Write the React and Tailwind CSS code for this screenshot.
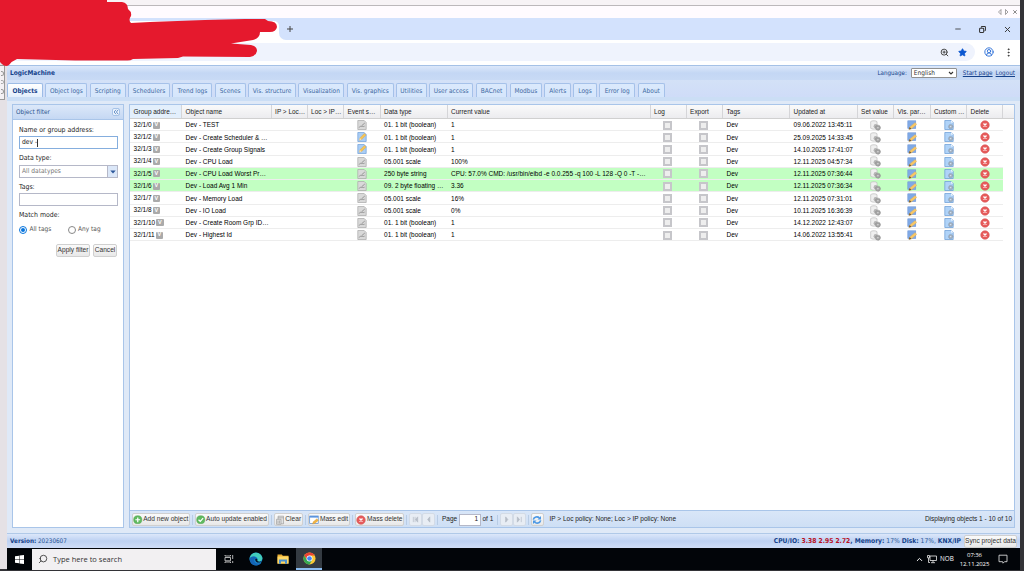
import { Search, ZoomIn, Star, CircleUserRound, EllipsisVertical, Minus, Copy, X, ChevronUp } from 'lucide-react'

const tabs = [
    { label: 'Object logs', width: 'w-[42px]' },
    { label: 'Scripting', width: 'w-[36px]' },
    { label: 'Schedulers', width: 'w-[42px]' },
    { label: 'Trend logs', width: 'w-[40px]' },
    { label: 'Scenes', width: 'w-[31px]' },
    { label: 'Vis. structure', width: 'w-[48px]' },
    { label: 'Visualization', width: 'w-[46px]' },
    { label: 'Vis. graphics', width: 'w-[47px]' },
    { label: 'Utilities', width: 'w-[30.5px]' },
    { label: 'User access', width: 'w-[44.5px]' },
    { label: 'BACnet', width: 'w-[31.5px]' },
    { label: 'Modbus', width: 'w-[32.5px]' },
    { label: 'Alerts', width: 'w-[26.5px]' },
    { label: 'Logs', width: 'w-[23.5px]' },
    { label: 'Error log', width: 'w-[36px]' },
    { label: 'About', width: 'w-[27.5px]' },
]

const headers = [
    'Group addre…', 'Object name', 'IP > Loc…', 'Loc > IP…', 'Event s…', 'Data type', 'Current value', 'Log',
    'Export', 'Tags', 'Updated at', 'Set value', 'Vis. par…', 'Custom …', 'Delete',
]

const objects = [
    { addr: '32/1/0', name: 'Dev - TEST', type: '01. 1 bit (boolean)', value: '1', updated: '09.06.2022 13:45:11' },
    { addr: '32/1/2', name: 'Dev - Create Scheduler & …', type: '01. 1 bit (boolean)', value: '1', updated: '25.09.2025 14:33:45', script: true },
    { addr: '32/1/3', name: 'Dev - Create Group Signals', type: '01. 1 bit (boolean)', value: '1', updated: '14.10.2025 17:41:07', script: true },
    { addr: '32/1/4', name: 'Dev - CPU Load', type: '05.001 scale', value: '100%', updated: '12.11.2025 04:57:34' },
    { addr: '32/1/5', name: 'Dev - CPU Load Worst Pr…', type: '250 byte string', value: 'CPU: 57.0% CMD: /usr/bin/eibd -e 0.0.255 -q 100 -L 128 -Q 0 -T -…', updated: '12.11.2025 07:36:44', active: true },
    { addr: '32/1/6', name: 'Dev - Load Avg 1 Min', type: '09. 2 byte floating …', value: '3.36', updated: '12.11.2025 07:36:34', active: true },
    { addr: '32/1/7', name: 'Dev - Memory Load', type: '05.001 scale', value: '16%', updated: '12.11.2025 07:31:01' },
    { addr: '32/1/8', name: 'Dev - IO Load', type: '05.001 scale', value: '0%', updated: '10.11.2025 16:36:39' },
    { addr: '32/1/10', name: 'Dev - Create Room Grp ID…', type: '01. 1 bit (boolean)', value: '1', updated: '14.12.2022 12:43:07' },
    { addr: '32/1/11', name: 'Dev - Highest Id', type: '01. 1 bit (boolean)', value: '1', updated: '14.06.2022 13:55:41' },
]

const columns = 'grid grid-cols-[52px_89.5px_36px_36.5px_36.5px_67px_203px_36px_36.5px_67px_67.5px_36.5px_36.5px_36.5px_36px]'
const tahoma = "font-['DejaVu_Sans_Condensed','DejaVu_Sans',sans-serif] [font-stretch:condensed]"

function ScriptIcon({ active }) {
    return (
        <svg viewBox="0 0 10 10" className="size-[10px]">
            <path d="M.8 .5h6.400l2 2v7H.8z" fill={active ? '#a9cdf5' : '#d9d9d9'} stroke={active ? '#6f9fd8' : '#a8a8a8'} strokeWidth=".7" />
            {active ? (
                <>
                    <path d="M2.3 8.2l.6-2.3L7.4 1.4l1.7 1.7-4.5 4.5z" fill="#f6c455" stroke="#d69331" strokeWidth=".3" />
                    <path d="M2.3 8.2l.6-2.3 1.7 1.7z" fill="#f7e5c2" />
                </>
            ) : (
                <path d="M2.2 7.6c1-2.400 1.400-.6 2.200-1.200S5.600 7.200 7.600 6.200M4.600 5.800L7.800 3" fill="none" stroke="#858585" strokeWidth=".8" />
            )}
        </svg>
    )
}

function SetValueIcon() {
    return (
        <svg viewBox="0 0 10 10" className="size-[11px]">
            <path d="M.6 1.500C1.500.4 5.500.4 6.400 1.500V7.500C5 8.600 2 8.600.6 7.500z" fill="#efefef" stroke="#b8b8b8" strokeWidth=".6" />
            <circle cx="5.200" cy="5.600" r="1.900" fill="#b5b5b5" />
            <circle cx="7.200" cy="7" r="2.300" fill="#a3a3a3" stroke="#8c8c8c" strokeWidth=".7" strokeDasharray=".8 .5" />
            <circle cx="7.200" cy="7" r=".7" fill="#ddd" />
        </svg>
    )
}

function VisIcon() {
    return (
        <svg viewBox="0 0 10 10" className="size-[10px]">
            <rect x=".8" y=".8" width="8" height="7.800" fill="#7fa9e6" stroke="#6690d5" strokeWidth=".5" />
            <path d="M1.800 9.600l.9-2.500 5.500-4.500 1.500 1.900-5.100 4.300z" fill="#f8c766" stroke="#d5a550" strokeWidth=".3" />
            <path d="M1.800 9.600l.9-2.500 1.700 1.900z" fill="#6d5431" />
        </svg>
    )
}

function CustomIcon() {
    return (
        <svg viewBox="0 0 10 10" className="size-[10px]">
            <path d="M.8 .5h6.400l2 2v7H.8z" fill="#b0d3f8" stroke="#669bd5" strokeWidth=".7" />
            <path d="M7.200 .5v2h2z" fill="#fff" />
            <circle cx="6.700" cy="6.600" r="2.200" fill="#a4b1bf" stroke="#7489a1" strokeWidth=".6" strokeDasharray=".8 .5" />
            <circle cx="6.700" cy="6.600" r=".7" fill="#dcecff" />
        </svg>
    )
}

function DeleteIcon() {
    return (
        <svg viewBox="0 0 10 10" className="size-[10px] shrink-0">
            <circle cx="5" cy="5" r="4.300" fill="#e65b5b" stroke="#d65050" strokeWidth=".5" />
            <path d="M3.500 3.500l3 3M6.500 3.500l-3 3" stroke="#fff" strokeWidth="1.400" />
        </svg>
    )
}

function GreenIcon({ d }) {
    return (
        <svg viewBox="0 0 10 10" className="size-[9.500px] shrink-0">
            <circle cx="5" cy="5" r="4.300" fill="#5fb95f" stroke="#46a24a" strokeWidth=".5" />
            <path d={d} fill="none" stroke="#fff" strokeWidth="1.300" />
        </svg>
    )
}

function ClearIcon() {
    return (
        <svg viewBox="0 0 10 10" className="size-[10px] shrink-0" fill="#e2e2e2" stroke="#959595" strokeWidth=".6">
            <path d="M3 1.200h5.500v7.600H3z" />
            <path d="M1.500 4.300h4.500v5H1.500z" />
            <path d="M3 5.500v3M4.500 5.500v3M3 2.800h5.500" />
        </svg>
    )
}

function MassEditIcon() {
    return (
        <svg viewBox="0 0 10 10" className="size-[10px] shrink-0">
            <rect x=".7" y="1" width="8.500" height="7.500" fill="#fff" stroke="#4f88d2" strokeWidth=".7" />
            <path d="M.7 1h8.500v1.600H.7z" fill="#5b94df" />
            <path d="M3.500 9l.7-2.200 3.700-3 1.500 1.600-3.600 3z" fill="#f2b544" stroke="#c88c2c" strokeWidth=".3" />
        </svg>
    )
}

function RefreshIcon() {
    return (
        <svg viewBox="0 0 10 10" className="size-[10px] shrink-0" fill="none" stroke="#4c98e5" strokeWidth="1.600">
            <path d="M1.300 4.600C2 1.800 5.500 1 7.500 3M8.700 5.400C8 8.200 4.500 9 2.500 7" />
            <path d="M9 .9v3.600H5.500zM1 9.100V5.500h3.500z" fill="#4c98e5" stroke="none" />
        </svg>
    )
}

function Button({ children, className = '' }) {
    return (
        <button className={`flex h-[13px] shrink-0 items-center justify-center whitespace-nowrap rounded-[2px] border border-[#d0d0d0] bg-gradient-to-b from-[#fafafa] to-[#e8e8e8] text-[6.600px] leading-none text-[#333] ${className}`}>
            {children}
        </button>
    )
}

function PageArrow({ d }) {
    return (
        <button className="flex h-[13px] w-[13px] shrink-0 items-center justify-center rounded-[2px] border border-[#d3dbe6] bg-[#e8edf4]">
            <svg viewBox="0 0 8 8" className="size-[7px]" fill="#b5bcc6" stroke="#b5bcc6" strokeWidth=".8">
                <path d={d} />
            </svg>
        </button>
    )
}

function BrowserChrome() {
    return (
        <header className="flex h-[65px] shrink-0 flex-col bg-white">
            <div className="h-[5px] bg-[#f7f3f6]" />
            <div className="flex h-[13px] items-center justify-end gap-[3px] border-t border-[#bcb8bb] bg-[#fffbff] pr-[2px] text-[#666]">
                <svg viewBox="0 0 12 6" className="h-[6px] w-[12px]" fill="none" stroke="currentColor" strokeWidth=".6">
                    <path d="M4 .5v5L1.500 3zM8.500.5v5L11 3z" />
                </svg>
                <X className="size-[6px]" strokeWidth={3} />
            </div>
            <div className="flex h-[22px] bg-[#d3e2fd]">
                {/* Active tab, with the curved foot on its right side */}
                <div className="flex w-[272px] items-end justify-end">
                    <div className="h-[19px] w-[200px] rounded-tr-[5px] bg-white" />
                </div>
                <div className="flex w-[7px] items-end bg-[#d3e2fd]">
                    <div className="h-[7px] w-[7px] bg-white">
                        <div className="h-full w-full rounded-bl-[7px] bg-[#d3e2fd]" />
                    </div>
                </div>
                <svg viewBox="0 0 8 8" className="mt-[7px] size-[8px]" stroke="#444" strokeWidth="1">
                    <path d="M1 4h6M4 1v6" />
                </svg>
                <div className="ml-auto flex items-center gap-[17px] pr-[8px] text-[#333]">
                    <Minus className="size-[8px]" strokeWidth={2.500} />
                    <Copy className="size-[7px] -scale-x-100" strokeWidth={3.500} />
                    <X className="size-[9px]" strokeWidth={2.500} />
                </div>
            </div>
            <div className="flex h-[24px] items-center">
                <div className="flex h-[18px] w-[968px] items-center justify-end gap-[9px] rounded-r-full bg-[#eff3fd] pr-[8px]">
                    <ZoomIn className="size-[9px] text-[#444]" strokeWidth={2.600} />
                    <Star className="size-[9px] fill-[#0b57d0] text-[#0b57d0]" />
                </div>
                <CircleUserRound className="ml-[9px] size-[10px] text-[#3273d8]" strokeWidth={2.300} />
                <EllipsisVertical className="ml-[9px] size-[11px] text-[#333]" strokeWidth={2} />
            </div>
        </header>
    )
}

function TitleBar() {
    return (
        <div className={`flex h-[15px] shrink-0 items-center border-t border-[#a5c1e6] bg-gradient-to-b from-[#dce8fa] via-[#c4d7f4] to-[#c8daf5] pl-[3px] pr-[5px] text-[6.500px] leading-none text-[#15428b] ${tahoma}`}>
            <span className="font-bold">LogicMachine</span>
            <span className="ml-auto mr-[4px] text-[6.200px] text-[#15428b]">Language:</span>
            <div className="flex h-[10px] w-[46px] items-center justify-between rounded-[1px] border border-[#909090] bg-white px-[2px] text-[6.500px] text-[#333]">
                English
                <svg viewBox="0 0 8 6" className="h-[4px] w-[6px]" fill="none" stroke="#333" strokeWidth="1.700">
                    <path d="M1 1.500l3 3 3-3" />
                </svg>
            </div>
            <a className="ml-[6px] text-[6.300px] underline">Start page</a>
            <a className="ml-[3px] text-[6.300px] underline">Logout</a>
        </div>
    )
}

function TabStrip() {
    return (
        <nav className={`flex h-[21px] shrink-0 items-end gap-[2.350px] border-b-[4px] border-[#cbdef5] bg-gradient-to-b from-[#d3e1f7] to-[#cfdcf8] text-[6.500px] leading-none ${tahoma}`}>
            <div className="flex h-[14px] w-[36px] items-center justify-center rounded-t-[2px] border border-b-0 border-[#9dbce6] bg-gradient-to-b from-white to-[#e4effc] pt-px text-[6.500px] font-bold text-[#15428b]">
                Objects
            </div>
            {tabs.map((tab) => (
                <div key={tab.label} className={`flex h-[14px] shrink-0 items-center justify-center whitespace-nowrap rounded-t-[2px] border border-b-0 border-[#a5c1e9] bg-gradient-to-b from-[#dbe9fc] to-[#d5e6fc] pt-px text-[#416aa3] ${tab.width}`}>
                    {tab.label}
                </div>
            ))}
        </nav>
    )
}

function FilterPanel() {
    return (
        <aside className={`flex w-[112px] shrink-0 flex-col border border-[#a9c5e9] bg-white text-[6.900px] leading-none text-[#222] ${tahoma}`}>
            <div className="flex h-[15px] shrink-0 items-center justify-between border-b border-[#a9c5e9] bg-gradient-to-b from-[#dce8f9] to-[#c5d8f3] pl-[3px] pr-[3px] text-[6.400px] text-[#2c548f]">
                <span className="pt-px">Object filter</span>
                <span className="flex size-[8px] items-center justify-center rounded-[2px] border border-[#a6c3e8] bg-[#edf4fd]">
                    <svg viewBox="0 0 8 8" className="size-[6px]" fill="none" stroke="#3970b5" strokeWidth="1">
                        <path d="M4 1L1.500 4 4 7M7 1L4.500 4 7 7" />
                    </svg>
                </span>
            </div>
            <div className="flex flex-col px-[6px]">
                <label className="mt-[7px] h-[8px]">Name or group address:</label>
                <div className="mt-px flex h-[13px] w-[99px] items-center border border-[#85aede] bg-white pl-[2px] text-[6.700px]">
                    dev -<span className="-ml-[.5px] h-[8px] w-px bg-[#333]" />
                </div>
                <label className="mt-[6px] h-[8px]">Data type:</label>
                <div className="mt-[2px] flex h-[13px] w-[99px] items-center justify-between border border-[#b5b8c8] bg-white pl-[2px] text-[6.600px] text-[#777]">
                    All datatypes
                    <span className="flex h-full w-[10px] items-center justify-center border-l border-[#b5b8c8] bg-[#dbe7f8]">
                        <svg viewBox="0 0 6 4" className="h-[4px] w-[6px]" fill="#2b579a">
                            <path d="M.3.500h5.400L3 3.500z" />
                        </svg>
                    </span>
                </div>
                <label className="mt-[6px] h-[8px]">Tags:</label>
                <div className="mt-px h-[13px] w-[99px] border border-[#b5b8c8] bg-white" />
                <label className="mt-[6px] h-[8px]">Match mode:</label>
                <div className="mt-[5px] flex h-[9px] items-center text-[6.500px] text-[#555]">
                    <span className="flex size-[8px] items-center justify-center rounded-full border border-[#0875dd] bg-white">
                        <span className="size-[4px] rounded-full bg-[#0875dd]" />
                    </span>
                    <span className="ml-[2.500px] w-[38.500px]">All tags</span>
                    <span className="size-[8px] rounded-full border border-[#888] bg-white" />
                    <span className="ml-[2px]">Any tag</span>
                </div>
                <div className="mt-[9.500px] flex justify-end gap-[3px] font-['Liberation_Sans',sans-serif]">
                    <Button className="w-[34px]">Apply filter</Button>
                    <Button className="w-[24px]">Cancel</Button>
                </div>
            </div>
        </aside>
    )
}

function Checkbox() {
    return (
        <span className="flex justify-center !pl-0 pr-[2px]">
            <span className="size-[9px] border-2 border-[#c6c6ca] bg-[#eee]" />
        </span>
    )
}

function ObjectRow({ object }) {
    return (
        <div className={`h-[12.240px] w-[873px] items-center border-b border-[#ededed] pt-[.5px] text-[6.470px] text-black *:pl-[3.600px] ${columns} ${object.active ? 'bg-[#c2ffc2]' : 'bg-white'}`}>
            <span className="flex items-center gap-px">
                {object.addr}
                <span className="flex h-[7px] w-[7.500px] items-center justify-center rounded-[1px] bg-[#aaa] text-[5.500px] font-bold text-white">V</span>
            </span>
            <span className="pt-px">{object.name}</span>
            <span />
            <span />
            <span className="flex justify-center !pl-0"><ScriptIcon active={object.script} /></span>
            <span className="pt-px">{object.type}</span>
            <span className="pt-px">{object.value}</span>
            <Checkbox />
            <Checkbox />
            <span className="pt-px">Dev</span>
            <span className="pt-px">{object.updated}</span>
            <span className="flex justify-center !pl-0"><SetValueIcon /></span>
            <span className="flex justify-center !pl-0"><VisIcon /></span>
            <span className="flex justify-center !pl-0"><CustomIcon /></span>
            <span className="flex justify-center !pl-0"><DeleteIcon /></span>
        </div>
    )
}

function Divider() {
    return <span className="mx-[2px] h-[10px] w-px shrink-0 bg-[#b8cce5]" />
}

function PagingToolbar() {
    return (
        <div className="flex h-[17px] items-center border-t border-[#a9c5e9] bg-gradient-to-b from-[#d9e6f8] to-[#cedff5] pl-[2px] pr-[2px] pt-px text-[6.500px] text-[#222]">
            <Button className="w-[57.500px] gap-[.5px]"><GreenIcon d="M5 2.500v5M2.500 5h5" />Add new object</Button>
            <Divider />
            <Button className="w-[74px] gap-[.5px]"><GreenIcon d="M2.700 5l1.800 1.800 3-3.600" />Auto update enabled</Button>
            <Divider />
            <Button className="w-[29px] gap-[.5px]"><ClearIcon />Clear</Button>
            <Divider />
            <Button className="w-[42.500px] gap-[.5px]"><MassEditIcon />Mass edit</Button>
            <Divider />
            <Button className="w-[49px] gap-[.5px]"><DeleteIcon />Mass delete</Button>
            <Divider />
            <PageArrow d="M1.500 1v6M3.500 1v6M6.500 1v6L4 4z" />
            <PageArrow d="M5.500 1v6L3 4z" />
            <Divider />
            <span className="ml-[2px] w-[17px]">Page</span>
            <span className="flex h-[12px] w-[22px] items-center justify-end border border-[#b5b8c8] bg-white pr-[2px]">1</span>
            <span className="ml-[1.500px] w-[12px]">of 1</span>
            <Divider />
            <PageArrow d="M3 1v6l2.500-3z" />
            <PageArrow d="M1.500 1v6L4 4zM6 1v6" />
            <Divider />
            <Button className="w-[13px]"><RefreshIcon /></Button>
            <span className="ml-[6px]">IP &gt; Loc policy: None; Loc &gt; IP policy: None</span>
            <span className="ml-auto">Displaying objects 1 - 10 of 10</span>
        </div>
    )
}

function ObjectGrid() {
    return (
        <section className="flex w-[886px] shrink-0 flex-col border border-[#a9c5e9] bg-white font-['Liberation_Sans',sans-serif] leading-none whitespace-nowrap">
            <div className="h-[14px] shrink-0 border-b border-[#d0d0d0] bg-gradient-to-b from-[#fafafa] to-[#ececef]">
                <div className={`h-full w-[873px] text-[6.450px] text-[#222] ${columns}`}>
                    {headers.map((header, i) => (
                        <span key={header} className={`flex items-center border-r border-[#d5d5d8] pl-[3.600px] pt-[1.500px] ${i === 0 ? 'bg-[#e3effc]' : ''}`}>
                            {header}
                        </span>
                    ))}
                </div>
            </div>
            <div className="flex-1">
                {objects.map((object) => <ObjectRow key={object.addr} object={object} />)}
            </div>
            <PagingToolbar />
        </section>
    )
}

function StatusBar() {
    return (
        <footer className={`flex h-[15px] shrink-0 items-center whitespace-nowrap border-t border-[#b0c9e8] bg-gradient-to-b from-[#dce7fa] via-[#bdd1f2] to-[#cfddf7] pl-[3px] pr-[3px] text-[6.300px] leading-none text-[#285594] ${tahoma}`}>
            <span><b className="text-[#15428b]">Version:</b> 20230607</span>
            <span className="ml-auto mr-[3px] text-[6.700px]">
                <b className="text-[#15428b]">CPU/IO: <span className="text-[#b90d1b]">3.38 2.95 2.72</span>, Memory:</b> 17% <b className="text-[#15428b]">Disk:</b> 17%, <b className="text-[#15428b]">KNX/IP</b>
            </span>
            <Button className="w-[53px] font-['Liberation_Sans',sans-serif]">Sync project data</Button>
        </footer>
    )
}

function Taskbar() {
    return (
        <div className="flex h-[22px] shrink-0 items-center bg-[#020509] font-['Open_Sans',sans-serif] leading-none text-white">
            <svg viewBox="0 0 10 10" className="ml-[8px] size-[9px]" fill="#fff">
                <path d="M0 1.300l4.500-.6v4H0zM5 .6L10 0v4.700H5zM0 5.200h4.500v4.100L0 8.700zM5 5.200h5V10l-5-.6z" />
            </svg>
            <div className="ml-[8px] flex h-[21px] w-[184px] items-center bg-[#f2f0f2] pl-[6px] text-[7.500px] text-[#333]">
                <Search className="size-[10px] -scale-x-100 text-[#333]" strokeWidth={2} />
                <span className="ml-[5px] pt-px">Type here to search</span>
            </div>
            <svg viewBox="0 0 10 10" className="ml-[8px] size-[10px]" fill="none" stroke="#ddd" strokeWidth=".8">
                <path d="M1 3.500h5.500v3.300H1zM1 1v1h5.500V1M1 9V8h5.500v1M8.700 1v4M8.700 7v2" />
            </svg>
            <svg viewBox="0 0 14 14" className="ml-[15px] size-[14px]">
                <circle cx="7" cy="7" r="6.400" fill="#168bd4" />
                <path d="M.8 5.600C2-.6 11.800-1 13.400 6c.2 3-3 4.200-5.100 3 .8-.8.9-4.500-3.200-4.500C2.500 4.500 1 6 .8 8z" fill="#43cdbb" />
                <path d="M.6 7c0-3 5.600-3.600 6.800-.8-3 .4-3 5.300 1.700 5.400 1.200 0 2.300-.4 3.200-1.100C9.500 15.300.6 14 .6 7z" fill="#1465b5" />
                <path d="M6.200 7.300C7 5.500 9 7 8.300 9c1.300.9 3 1 4.500 0-1.200 2.300-6.800 2.500-6.600-1.700z" fill="#071426" />
            </svg>
            <svg viewBox="0 0 12 12" className="ml-[14px] size-[12px]">
                <path d="M.5 1.500h4.300l1 1.200h5.700v8H.5z" fill="#e9ae33" />
                <path d="M.5 3.500h11v7H.5z" fill="#ffd967" />
                <path d="M2 6.500h8v4.300H8V8.500H4v2.300H2z" fill="#4b91cf" />
            </svg>
            <div className="ml-[7px] flex h-[22px] w-[26px] items-center justify-center border-b-2 border-[#8abcf0] bg-[#343b42]">
                <svg viewBox="0 0 14 14" className="size-[13px]">
                    <circle cx="7" cy="7" r="6.500" fill="#fcc934" />
                    <path d="M1.370 3.750A6.500 6.500 0 0 1 12.630 3.750H7L4.200 8.600z" fill="#ea4335" />
                    <path d="M1.370 3.750A6.500 6.500 0 0 0 7 13.500L9.800 8.600H4.200z" fill="#34a853" />
                    <circle cx="7" cy="7" r="3.200" fill="#fff" />
                    <circle cx="7" cy="7" r="2.500" fill="#4285f4" />
                </svg>
            </div>
            <div className="ml-auto flex items-center pr-[12px] text-[6.300px]">
                <ChevronUp className="size-[9px]" strokeWidth={2.600} />
                <svg viewBox="0 0 10 10" className="ml-[3px] size-[10px]" fill="none" stroke="#eee" strokeWidth=".8">
                    <path d="M3 2h6.500v4.500H3zM6 6.500v2M4 8.700h4M.5 1.500h2v2.300h-2zM1.500 4v4.500H3" />
                </svg>
                <span className="ml-[3.500px] w-[14px]">NOB</span>
                <div className="ml-[5px] flex w-[31px] flex-col items-center gap-[3px] text-[6px] tracking-[-0.100px]">
                    <span>07:36</span>
                    <span>12.11.2025</span>
                </div>
                <svg viewBox="0 0 10 10" className="ml-[8px] size-[10px]" fill="none" stroke="#eee" strokeWidth=".8">
                    <path d="M1 1.200h8v6.500H6.500L5 9.200 4.700 7.700H1z" />
                </svg>
            </div>
        </div>
    )
}

export default function App() {
    return (
        <div className="relative flex h-[571px] w-[1024px] flex-col overflow-hidden bg-[#333337]">
            <div className="flex h-[569px]">
                {/* Sliver of the host window on the left edge */}
                <div className="w-[7px] shrink-0 bg-[#e5e1e5] pt-[65px]">
                    <div className="flex h-[35px] w-[5px] flex-col items-end justify-around border-y border-r border-[#999] bg-[#f4f1f4] py-[3px]">
                        <span className="h-[5px] w-[3px] rounded-r-full border border-l-0 border-[#999]" />
                        <span className="h-[4px] w-[3px] rounded-r-full border border-l-0 border-[#aaa]" />
                        <span className="h-[5px] w-[3px] rounded-r-full border border-l-0 border-[#999]" />
                    </div>
                </div>
                <div className="flex w-[1013px] shrink-0 flex-col">
                    <BrowserChrome />
                    <TitleBar />
                    <TabStrip />
                    <main className="flex h-[432px] shrink-0 gap-[5px] bg-[#dfe9f7] pb-[5px] pl-[5px] pt-[3px]">
                        <FilterPanel />
                        <ObjectGrid />
                    </main>
                    <StatusBar />
                    <Taskbar />
                </div>
            </div>
            {/* Marker strokes hiding the browser tabs and address */}
            <svg viewBox="0 0 280 68" className="absolute left-0 top-0 h-[68px] w-[280px]" fill="#e5192d">
                <path d="M0 0H107V2H122Q128 3 128 9Q132 12 131 16Q128 20 131 23L150 22L205 20L245 19H265L268 21Q277 21 277 27Q276 32 270 32H260Q260 38 253 40L231 43.500L251 45Q257 46 257 51Q256 56 250 57L183 56.500L178 58L133 59Q130 61 126 60.500H75L17 59Q12 61 9 65Q5 68 0 62z" />
            </svg>
        </div>
    )
}
